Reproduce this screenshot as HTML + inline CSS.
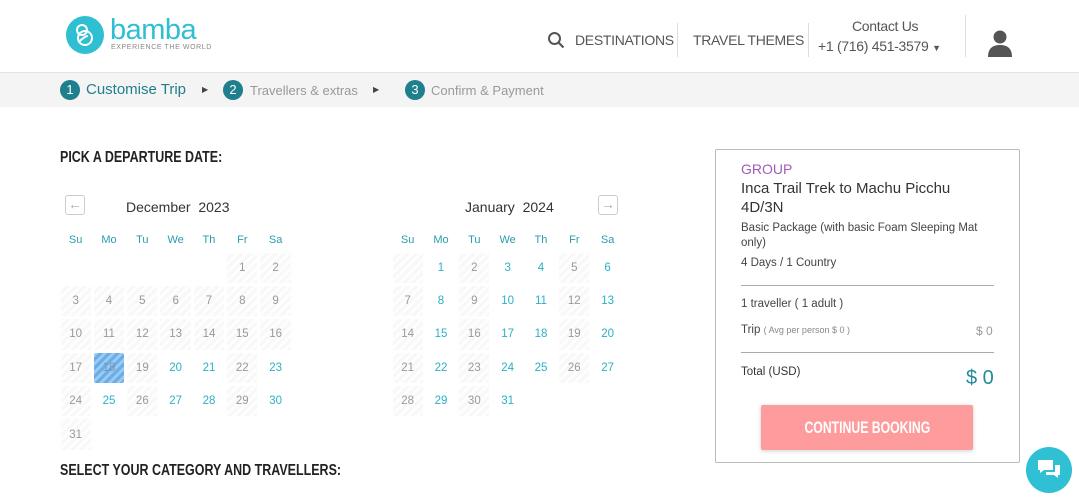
<!DOCTYPE html>
<html><head><meta charset="utf-8"><style>
*{margin:0;padding:0;box-sizing:border-box}
body{width:1079px;height:500px;overflow:hidden;background:#fff;font-family:"Liberation Sans",sans-serif;position:relative;color:#333}
.a{position:absolute}
.nav{font-size:14px;color:#555;letter-spacing:-.3px}
.steps{left:0;top:72px;width:1079px;height:35px;background:#f4f4f4;border-top:1px solid #e3e3e3}
.num{width:20px;height:20px;border-radius:50%;background:#1f7f8c;color:#fff;font-size:13px;text-align:center;line-height:20px}
.h{font-family:"Liberation Sans",sans-serif;font-weight:bold;font-size:16px;color:#222;transform:scaleX(.78);transform-origin:left}
.cal{display:grid;grid-template-columns:repeat(7,33.33px);grid-auto-rows:33.4px}
.cal div{margin:1.5px;font-size:11.5px;color:#999;display:flex;align-items:center;justify-content:center}
.cal .d{background:repeating-linear-gradient(-45deg,#f8f8f8 0 3px,#fefefe 3px 6px)}
.cal .b{color:#2ab0c6;background:#fff}
.cal .s{background:repeating-linear-gradient(-45deg,#6aaee8 0 3px,#9ccaf2 3px 6px);border-radius:2px;color:#7a95b0}
.wd{display:grid;grid-template-columns:repeat(7,33.33px);font-size:11px;color:#2a9cb0;text-align:center}
.mt{font-size:14px;color:#333}
.arr{width:20px;height:20px;border:1px solid #ccc;border-radius:3px;color:#aaa;font-size:14px;text-align:center;line-height:17px}
</style></head><body>
<div class="a" style="left:66px;top:16px;width:38px;height:38px;border-radius:50%;background:#2fbfd3"></div>
<svg class="a" style="left:66px;top:16px" width="38" height="38"><g fill="none" stroke="#fff" stroke-width="2"><circle cx="16" cy="14" r="5"/><circle cx="19" cy="22" r="7"/><path d="M12 26c4-2 6-6 10-6"/></g></svg>
<div class="a" style="left:110px;top:14px;font-size:29px;color:#2fbfd3;letter-spacing:-.5px">bamba</div>
<div class="a" style="left:111px;top:44px;font-size:7px;color:#888;letter-spacing:.6px">EXPERIENCE THE WORLD</div>
<svg class="a" style="left:547px;top:31px" width="18" height="18"><circle cx="7.5" cy="7.5" r="5.5" fill="none" stroke="#555" stroke-width="2"/><path d="M11.5 11.5l5 5" stroke="#555" stroke-width="2.2"/></svg>
<div class="a nav" style="left:575px;top:32px">DESTINATIONS</div>
<div class="a" style="left:677px;top:23px;width:1px;height:34px;background:#ddd"></div>
<div class="a nav" style="left:693px;top:32px">TRAVEL THEMES</div>
<div class="a" style="left:808px;top:23px;width:1px;height:34px;background:#ddd"></div>
<div class="a nav" style="left:852px;top:18px">Contact Us</div>
<div class="a nav" style="left:818px;top:38px">+1 (716) 451-3579 <span style="font-size:9px">&#9660;</span></div>
<div class="a" style="left:965px;top:15px;width:1px;height:42px;background:#ddd"></div>
<svg class="a" style="left:988px;top:29px" width="24" height="28"><circle cx="12" cy="8" r="6.5" fill="#555"/><path d="M0 28c0-9 5-12 12-12s12 3 12 12z" fill="#555"/></svg>
<div class="a steps"></div>
<div class="a num" style="left:60px;top:80px">1</div>
<div class="a" style="left:86px;top:81px;font-size:15px;color:#1f7f8c">Customise Trip</div>
<div class="a" style="left:202px;top:85px;font-size:8px;color:#444">&#9654;</div>
<div class="a num" style="left:223px;top:80px">2</div>
<div class="a" style="left:250px;top:83px;font-size:13px;color:#999">Travellers &amp; extras</div>
<div class="a" style="left:373px;top:85px;font-size:8px;color:#444">&#9654;</div>
<div class="a num" style="left:405px;top:80px">3</div>
<div class="a" style="left:431px;top:83px;font-size:13px;color:#999">Confirm &amp; Payment</div>
<div class="a h" style="left:60px;top:149px">PICK A DEPARTURE DATE:</div>
<div class="a h" style="left:60px;top:462px">SELECT YOUR CATEGORY AND TRAVELLERS:</div>
<div class="a arr" style="left:65px;top:195px">&#8592;</div>
<div class="a mt" style="left:126px;top:199px">December&nbsp; 2023</div>
<div class="a wd" style="left:59px;top:234px"><span>Su</span><span>Mo</span><span>Tu</span><span>We</span><span>Th</span><span>Fr</span><span>Sa</span></div>
<div class="a cal" style="left:59px;top:251px">
<div></div><div></div><div></div><div></div><div></div><div class="d">1</div><div class="d">2</div>
<div class="d">3</div><div class="d">4</div><div class="d">5</div><div class="d">6</div><div class="d">7</div><div class="d">8</div><div class="d">9</div>
<div class="d">10</div><div class="d">11</div><div class="d">12</div><div class="d">13</div><div class="d">14</div><div class="d">15</div><div class="d">16</div>
<div class="d">17</div><div class="s">18</div><div class="d">19</div><div class="b">20</div><div class="b">21</div><div class="d">22</div><div class="b">23</div>
<div class="d">24</div><div class="b">25</div><div class="d">26</div><div class="b">27</div><div class="b">28</div><div class="d">29</div><div class="b">30</div>
<div class="d">31</div>
</div>
<div class="a arr" style="left:598px;top:195px">&#8594;</div>
<div class="a mt" style="left:465px;top:199px">January&nbsp; 2024</div>
<div class="a wd" style="left:391px;top:234px"><span>Su</span><span>Mo</span><span>Tu</span><span>We</span><span>Th</span><span>Fr</span><span>Sa</span></div>
<div class="a cal" style="left:391px;top:251px">
<div class="d"></div><div class="b">1</div><div class="d">2</div><div class="b">3</div><div class="b">4</div><div class="d">5</div><div class="b">6</div>
<div class="d">7</div><div class="b">8</div><div class="d">9</div><div class="b">10</div><div class="b">11</div><div class="d">12</div><div class="b">13</div>
<div class="d">14</div><div class="b">15</div><div class="d">16</div><div class="b">17</div><div class="b">18</div><div class="d">19</div><div class="b">20</div>
<div class="d">21</div><div class="b">22</div><div class="d">23</div><div class="b">24</div><div class="b">25</div><div class="d">26</div><div class="b">27</div>
<div class="d">28</div><div class="b">29</div><div class="d">30</div><div class="b">31</div>
</div>
<div class="a" style="left:715px;top:149px;width:305px;height:314px;border:1px solid #bbb;border-radius:2px"></div>
<div class="a" style="left:741px;top:161px;font-size:14px;color:#a05cb8">GROUP</div>
<div class="a" style="left:741px;top:179px;font-size:15px;color:#333;line-height:19px">Inca Trail Trek to Machu Picchu<br>4D/3N</div>
<div class="a" style="left:741px;top:221px;font-size:11.5px;color:#444;line-height:15px;width:260px">Basic Package (with basic Foam Sleeping Mat only)</div>
<div class="a" style="left:741px;top:257px;font-size:11.5px;color:#444">4 Days / 1 Country</div>
<div class="a" style="left:741px;top:285px;width:253px;height:1px;background:#aaa"></div>
<div class="a" style="left:741px;top:298px;font-size:11.5px;color:#444">1 traveller ( 1 adult )</div>
<div class="a" style="left:741px;top:324px;font-size:11.5px;color:#444">Trip <span style="font-size:9px;color:#888">( Avg per person $ 0 )</span></div>
<div class="a" style="left:976px;top:324px;font-size:12px;color:#999">$ 0</div>
<div class="a" style="left:741px;top:352px;width:253px;height:1px;background:#aaa"></div>
<div class="a" style="left:741px;top:366px;font-size:11.5px;color:#333">Total (USD)</div>
<div class="a" style="left:966px;top:367px;font-size:20px;color:#1f8c99">$ 0</div>
<div class="a" style="left:761px;top:405px;width:212px;height:45px;background:#fe9b9c;border-radius:2px;box-shadow:0 1px 4px rgba(0,0,0,.2);color:#fff;font-weight:bold;font-size:17px;text-align:center;line-height:45px"><span style="display:inline-block;transform:scaleX(.72)">CONTINUE BOOKING</span></div>
<div class="a" style="left:1026px;top:447px;width:46px;height:46px;border-radius:50%;background:#2fc0d3"></div>
<svg class="a" style="left:1036px;top:458px" width="26" height="24"><path d="M2 2h15v10H8l-4 3v-3H2z" fill="#fff"/><path d="M19 7h5v10h-2v3l-4-3H10v-3h9z" fill="#fff"/></svg>
</body></html>
